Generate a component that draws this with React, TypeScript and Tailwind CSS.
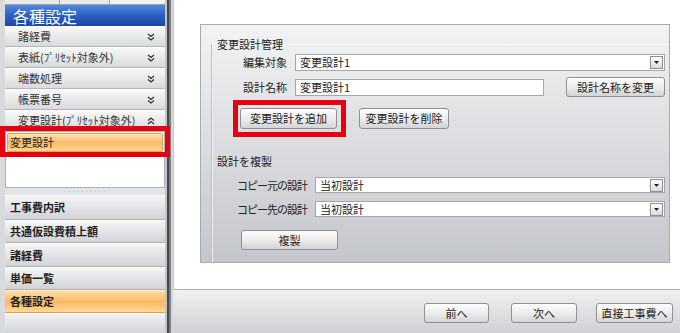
import { ReactNode } from "react";

const Chevs = ({ up }: { up?: boolean }) => (
    <svg width="8" height="8" viewBox="0 0 8 8" className={up ? "rotate-180" : ""}>
        <path d="M1 1 L4 3.5 L7 1 M1 4.5 L4 7 L7 4.5" fill="none" stroke="#333" strokeWidth="1.3" />
    </svg>
);

const DropArrow = () => (
    <span className="flex h-[13px] w-[13px] items-center justify-center border border-[#8c8e91] bg-gradient-to-b from-white to-[#d9dadc]">
        <svg width="5" height="3" viewBox="0 0 5 3">
            <path d="M0 0 L5 0 L2.5 3 Z" fill="#222" />
        </svg>
    </span>
);

const Select = ({ value, className }: { value: string; className: string }) => (
    <div className={`flex items-center justify-between border border-[#a3a6aa] bg-white pl-[4px] pr-[1px] ${className}`}>
        <span>{value}</span>
        <DropArrow />
    </div>
);

const Btn = ({ children, className }: { children: ReactNode; className: string }) => (
    <div className={`flex items-center justify-center rounded-[3px] border border-[#8e9093] bg-gradient-to-b from-[#fdfdfd] via-[#ededed] to-[#d3d4d6] shadow-[inset_0_1px_0_#fff] ${className}`}>
        {children}
    </div>
);

const accordion = [
    { label: "諸経費" },
    { label: "表紙(ﾌﾟﾘｾｯﾄ対象外)" },
    { label: "端数処理" },
    { label: "帳票番号" },
    { label: "変更設計(ﾌﾟﾘｾｯﾄ対象外)", up: true },
];

const navRows = [
    { label: "工事費内訳", h: "h-[25px]" },
    { label: "共通仮設費積上額", h: "h-[23px]" },
    { label: "諸経費", h: "h-[24px]" },
    { label: "単価一覧", h: "h-[23px]" },
];

const App = () => {
    return (
        <div className="relative flex h-[333px] w-[680px] overflow-hidden bg-white font-['Noto_Sans_CJK_JP','Liberation_Sans',sans-serif] text-[11px] leading-none text-[#222]">
            {/* sidebar */}
            <aside className="flex w-[165px] flex-col bg-[#d9dadd] pl-[5px]">
                <div className="flex h-[5px] border-b border-[#9ea0a4]">
                    <div className="w-[55px] border-r border-[#a4a6aa] bg-[#e9e9ea]" />
                    <div className="w-[50px] border-r border-[#a4a6aa] bg-[#e9e9ea]" />
                    <div className="flex-1 bg-[#f2f2f2]" />
                </div>
                <div className="flex h-[21px] items-center bg-gradient-to-b from-[#5289e0] via-[#2d5fc2] to-[#1a46a6] pl-[8px] text-[16px] text-white">
                    各種設定
                </div>
                {accordion.map((row) => (
                    <div
                        key={row.label}
                        className="flex h-[21px] items-center justify-between border-b border-t border-b-[#b3b5b9] border-t-white bg-gradient-to-b from-[#f8f8f8] to-[#d9dadc] pl-[13px] pr-[10px] text-[#333]"
                    >
                        <span>{row.label}</span>
                        <Chevs up={row.up} />
                    </div>
                ))}
                <div className="h-[57px] border border-[#a9b2c0] bg-white">
                    <div className="mx-[1px] mt-[1px] flex h-[19px] items-center rounded-[2px] border border-[#e2a24a] bg-gradient-to-b from-[#fde5b0] via-[#f9b96a] to-[#fdd68c] pl-[2px] text-[#222]">
                        変更設計
                    </div>
                </div>
                <div className="flex h-[7px] items-center justify-center bg-[#e4e5e7]">
                    <span className="text-[6px] leading-none tracking-[1px] text-[#8a8c90]">··········</span>
                </div>
                {navRows.map((row) => (
                    <div
                        key={row.label}
                        className={`flex items-center border-b border-t border-b-[#adafb3] border-t-white bg-gradient-to-b from-[#f5f5f6] to-[#d2d3d6] pl-[5px] font-bold text-[#1e1e1e] ${row.h}`}
                    >
                        {row.label}
                    </div>
                ))}
                <div className="flex h-[23px] items-center border-b border-t border-b-[#d9a150] border-t-[#fff0cf] bg-gradient-to-b from-[#fde0a8] via-[#f9b866] to-[#fdd993] pl-[5px] font-bold text-[#1e1e1e]">
                    各種設定
                </div>
                <div className="flex-1 border-t border-white bg-gradient-to-b from-[#f2f2f3] to-[#d4d5d8]" />
            </aside>

            {/* splitter */}
            <div className="flex w-[8px]">
                <div className="w-[2px] bg-[#c3c4c7]" />
                <div className="w-[2px] bg-[#48494b]" />
                <div className="w-[2px] bg-[#7e7f83]" />
                <div className="w-[2px] bg-[#d6d7d9]" />
            </div>

            {/* main */}
            <main className="flex flex-1 flex-col">
                <div className="flex-1 border-l border-[#c9cacd] bg-white pl-[26px] pt-[24px]">
                    <div className="flex h-[239px] w-[470px] flex-col border border-[#a8abaf] bg-gradient-to-b from-[#f3f3f3] to-[#c3c6cb]">
                        <fieldset className="ml-[11px] mt-[12px] flex min-w-0 flex-1 flex-col border-l border-t border-l-[#f4f4f5] border-t-[#fafafa] shadow-[-1px_0_0_#b9bcc0]">
                            <legend className="ml-[4px] p-0 leading-[14px]">変更設計管理</legend>
                            <div className="mt-[3px] flex h-[17px] items-center">
                                <span className="w-[74px] text-right">編集対象</span>
                                <Select value="変更設計1" className="ml-[8px] h-[17px] w-[370px]" />
                            </div>
                            <div className="mt-[6px] flex h-[20px] items-center">
                                <span className="w-[74px] text-right">設計名称</span>
                                <div className="ml-[8px] flex h-[17px] w-[249px] items-center border border-[#a3a6aa] bg-white pl-[4px]">
                                    変更設計1
                                </div>
                                <Btn className="ml-[22px] h-[20px] w-[99px]">設計名称を変更</Btn>
                            </div>
                            <div className="mt-[11px] flex gap-[22px] pl-[27px]">
                                <Btn className="h-[21px] w-[97px]">変更設計を追加</Btn>
                                <Btn className="h-[21px] w-[90px]">変更設計を削除</Btn>
                            </div>
                            <div className="mt-[25px] h-[14px] pl-[4px] leading-[14px]">設計を複製</div>
                            <div className="mt-[9px] flex h-[16px] items-center">
                                <span className="w-[94px] text-right tracking-[-1px]">コピー元の設計</span>
                                <Select value="当初設計" className="ml-[8px] h-[16px] w-[350px]" />
                            </div>
                            <div className="mt-[8px] flex h-[16px] items-center">
                                <span className="w-[94px] text-right tracking-[-1px]">コピー先の設計</span>
                                <Select value="当初設計" className="ml-[8px] h-[16px] w-[350px]" />
                            </div>
                            <div className="mt-[13px] pl-[28px]">
                                <Btn className="h-[20px] w-[97px]">複製</Btn>
                            </div>
                        </fieldset>
                    </div>
                </div>
                <div className="flex h-[44px] justify-end border-t border-[#aeb0b4] bg-gradient-to-b from-[#f1f1f2] to-[#cfd0d3] pr-[7px] pt-[13px]">
                    <Btn className="h-[20px] w-[65px]">前へ</Btn>
                    <Btn className="ml-[22px] h-[20px] w-[66px]">次へ</Btn>
                    <Btn className="ml-[19px] h-[20px] w-[77px]">直接工事費へ</Btn>
                </div>
            </main>

            {/* annotation frames */}
            <div className="absolute left-0 top-[126px] h-[31px] w-[170px] border-[5px] border-[#e60012]" />
            <div className="absolute left-[233px] top-[100px] h-[37px] w-[113px] border-[5px] border-[#e60012]" />
        </div>
    );
};

export default App;
